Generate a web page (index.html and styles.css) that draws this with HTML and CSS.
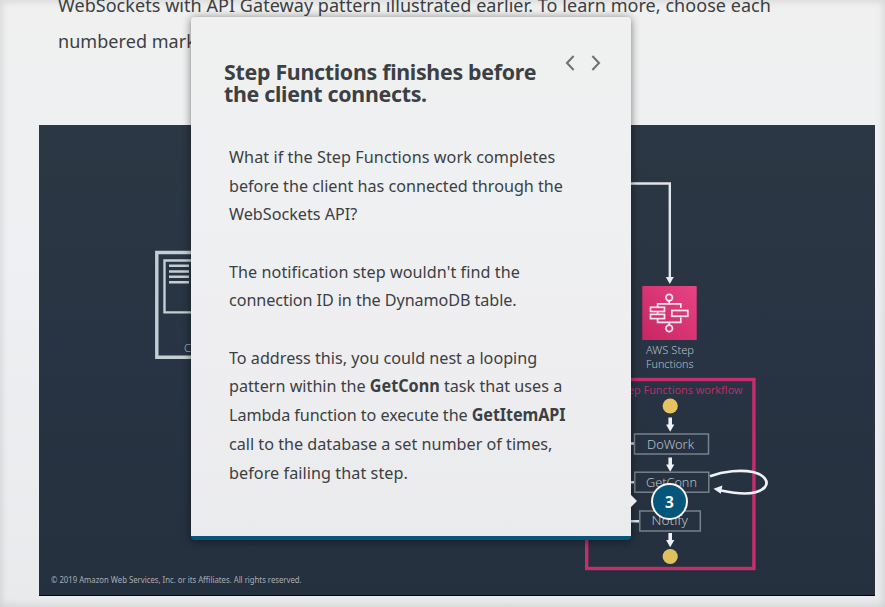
FILE: index.html
```
<!DOCTYPE html>
<html lang="en">
<head>
<meta charset="utf-8">
<title>WebSockets with API Gateway</title>
<link rel="stylesheet" href="styles.css">
</head>
<body>
<main class="page">
  <p class="intro">WebSockets with API Gateway pattern illustrated earlier. To learn more, choose each<br>numbered marker.</p>
  <figure class="diagram">
    <svg class="drawing" width="836" height="471" viewBox="39 125 836 471">
      <defs>
        <linearGradient id="pink" x1="0" y1="1" x2="1" y2="0"><stop offset="0" stop-color="#c92563"/><stop offset="1" stop-color="#e64482"/></linearGradient>
      </defs>
      <g fill="none" stroke="#c4cfd4">
        <path stroke-width="3.4" d="M200 252.5H156.8V357.3H200"/>
        <path stroke-width="2.4" d="M200 260.5H164.5V312.4H200"/>
        <path stroke-width="2.5" d="M169 265.7H189M169 271.4H189M169 276.8H189M169 282.2H189"/>
      </g>
      <text class="label" x="184" y="352" font-size="11">Client</text>
      <g fill="none" stroke="#dfe6e9" stroke-width="2.4">
        <path d="M625 183.5H669.8V278"/>
        <path d="M625 443.5H634M625 482.3H634M625 521.3H639"/>
      </g>
      <path fill="#e8eef0" d="M665.8 277H673.8L669.8 284Z"/>
      <rect x="642.3" y="286" width="54.4" height="54" fill="url(#pink)"/>
      <g fill="none" stroke="#fbe6ef" stroke-width="1.7">
        <circle cx="669.2" cy="297.6" r="3.3"/>
        <circle cx="669.2" cy="328.4" r="3.3"/>
        <path d="M669.2 301V304M669.2 322V325M657.6 307V303.8H680.8V308M657.6 319V322.3H680.8V317.5M657.6 312V315"/>
        <rect x="650.5" y="307.3" width="14" height="4.2"/>
        <rect x="650.5" y="314.4" width="14" height="4.2"/>
        <rect x="671.8" y="310.5" width="16" height="5.8"/>
      </g>
      <text class="label" x="646" y="354" font-size="11.5" textLength="48" lengthAdjust="spacingAndGlyphs">AWS Step</text>
      <text class="label" x="646" y="368" font-size="11.5" textLength="47.5" lengthAdjust="spacingAndGlyphs">Functions</text>
      <rect x="586.7" y="379.5" width="167.2" height="189" fill="none" stroke="#c52e6b" stroke-width="3.4"/>
      <text class="workflow" x="624" y="394" font-size="11.4" textLength="118.5" lengthAdjust="spacingAndGlyphs">tep Functions workflow</text>
      <circle cx="670.2" cy="406" r="7.6" fill="#e5c45f"/>
      <circle cx="670.2" cy="556.5" r="7.6" fill="#dfc05f"/>
      <g fill="#eef2f4">
        <path d="M668.4 417.5H672V424.5H674.3L670.2 431.8L666.1 424.5H668.4Z"/>
        <path d="M668.4 457.5H672V464.5H674.3L670.2 471.8L666.1 464.5H668.4Z"/>
        <path d="M668.4 533H672V540H674.3L670.2 547.3L666.1 540H668.4Z"/>
      </g>
      <g fill="none" stroke="#75838c" stroke-width="1.5">
        <rect x="634.5" y="434" width="74" height="20"/>
        <rect x="634.8" y="472.2" width="74" height="20"/>
        <rect x="639.8" y="511" width="60.5" height="20"/>
      </g>
      <text class="node" x="647" y="448.5" textLength="47" lengthAdjust="spacingAndGlyphs">DoWork</text>
      <text class="node" x="646" y="486.7" textLength="51" lengthAdjust="spacingAndGlyphs">GetConn</text>
      <text class="node" x="651.5" y="525.2" textLength="36.5" lengthAdjust="spacingAndGlyphs">Notify</text>
      <path fill="none" stroke="#eef2f4" stroke-width="2.7" d="M710 476.3C724 471 741 469.6 753 472C765 475 769 482 765 487C759 494 743 495.2 721 490.5"/>
      <path fill="#eef2f4" d="M713.5 488.7L722.4 485.5L720.8 493.7Z"/>
    </svg>
    <figcaption class="copyright">© 2019 Amazon Web Services, Inc. or its Affiliates. All rights reserved.</figcaption>
  </figure>
</main>
<div class="vignette"></div>
<section class="popup">
  <header class="popup-head">
    <h2>Step Functions finishes before<br>the client connects.</h2>
    <nav class="arrows">
      <svg width="10" height="16" viewBox="0 0 10 16"><path d="M8.6 1L2 8L8.6 15"/></svg>
      <svg width="10" height="16" viewBox="0 0 10 16"><path d="M1.4 1L8 8L1.4 15"/></svg>
    </nav>
  </header>
  <div class="popup-body">
    <p><span class="loose">What if the Step Functions work completes</span><br>before the client has connected through the<br>WebSockets API?</p>
    <p><span class="loose">The notification step wouldn't find the</span><br><span class="tight">connection ID in the DynamoDB table.</span></p>
    <p>To address this, you could nest a looping<br>pattern within the <b>GetConn</b> task that uses a<br><span class="tight">Lambda function to execute the <b>GetItemAPI</b></span><br>call to the database a set number of times,<br><span class="loose">before failing that step.</span></p>
  </div>
</section>
<button class="marker">3</button>
</body>
</html>
```
FILE: styles.css
```
* { box-sizing: border-box; }
body {
  margin: 0;
  height: 607px;
  overflow: hidden;
  position: relative;
  background: linear-gradient(#f0f0f0, #eff0f3 40%, #e9eaec);
  color: #3c4043;
  font-family: "Noto Sans", "Open Sans", sans-serif;
}
.page { height: 607px; overflow: hidden; padding-left: 39px; }
.intro {
  margin: -13px 0 66px 19px;
  height: 72px;
  font-size: 18px;
  line-height: 36px;
  letter-spacing: .05px;
  white-space: nowrap;
}
.diagram {
  position: relative;
  margin: 0;
  width: 836px;
  height: 471px;
  background: linear-gradient(#2c3744, #283443 50%, #25303e);
  border-bottom: 1px solid #03050c;
}
.drawing { display: block; }
.label, .node { fill: #b8c0c6; font-weight: 300; }
.node { font-size: 13.5px; }
.workflow { fill: #b52f6b; }
.copyright {
  position: absolute;
  left: 12px;
  bottom: 8px;
  color: #a7afb6;
  font-size: 8px;
  line-height: 14px;
  white-space: nowrap;
  transform: scaleX(.967);
  transform-origin: 0 0;
}
.vignette {
  position: absolute;
  inset: 0;
  box-shadow: inset 0 0 7px 2px rgba(0, 0, 0, .1);
}
.popup {
  position: absolute;
  left: 191px;
  top: 17px;
  width: 440px;
  height: 523px;
  padding: 45px 28px 0 33px;
  background: linear-gradient(#f0f0f0, #eff0f2 35%, #eeeef0 65%, #eaebec);
  border-bottom: 4px solid #06557a;
  border-radius: 4px;
  box-shadow: 0 1px 9px rgba(0, 0, 0, .5);
}
.popup::after {
  content: "";
  position: absolute;
  left: 100%;
  top: 478px;
  border: 6.5px solid transparent;
  border-left: 6px solid #ecedef;
  border-right: 0;
}
.popup-head { display: flex; justify-content: space-between; height: 81px; }
h2 {
  margin: -2px 0 0;
  font-size: 22px;
  line-height: 22px;
  white-space: nowrap;
  letter-spacing: -.3px;
  transform: scaleX(.971);
  transform-origin: 0 0;
}
.arrows { display: flex; gap: 16px; height: 16px; margin: -7px 2px 0 0; }
.arrows path { fill: none; stroke: #717273; stroke-width: 2.1; }
.popup-body {
  margin-left: 4.5px;
  font-size: 16.9px;
  line-height: 28.7px;
  white-space: nowrap;
  transform: scaleX(.957);
  transform-origin: 0 0;
}
.popup-body p { margin: 0 0 28.6px; }
.loose { letter-spacing: .07px; }
.tight { letter-spacing: -.08px; }
.marker {
  position: absolute;
  left: 651px;
  top: 483px;
  width: 37px;
  height: 37px;
  padding: 0;
  border: 2px solid #f4f5f6;
  border-radius: 50%;
  background: #06557a;
  color: #f4f5f6;
  font: bold 15.5px/32px "Noto Sans", sans-serif;
}
```
